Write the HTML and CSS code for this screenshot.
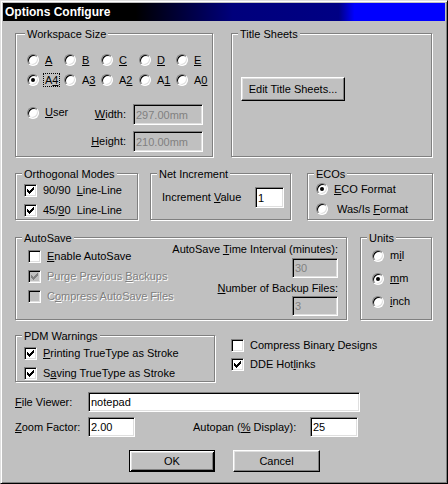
FILE: index.html
```html
<!DOCTYPE html>
<html lang="en">
<head>
    <title>Options Configure</title>
    <link rel="stylesheet" href="styles.css">
</head>
<body>
    <div class="dialog">
        <div class="titlebar">Options Configure</div>
        <div class="content">

            <div class="row row-1">
                <div class="group workspace">
                    <span class="legend legend-wide">Workspace Size</span>
                    <div class="sizes">
                        <label class="opt"><span class="radio"></span><span><u>A</u></span></label>
                        <label class="opt"><span class="radio"></span><span><u>B</u></span></label>
                        <label class="opt"><span class="radio"></span><span><u>C</u></span></label>
                        <label class="opt"><span class="radio"></span><span><u>D</u></span></label>
                        <label class="opt"><span class="radio"></span><span><u>E</u></span></label>
                        <label class="opt"><span class="radio on"></span><span class="focus">A<u>4</u></span></label>
                        <label class="opt"><span class="radio"></span><span>A<u>3</u></span></label>
                        <label class="opt"><span class="radio"></span><span>A<u>2</u></span></label>
                        <label class="opt"><span class="radio"></span><span>A<u>1</u></span></label>
                        <label class="opt"><span class="radio"></span><span>A<u>0</u></span></label>
                    </div>
                    <div class="user">
                        <label class="opt user-opt"><span class="radio"></span><span><u>U</u>ser</span></label>
                        <span class="field-label"><u>W</u>idth:</span>
                        <input class="field" type="text" value="297.00mm" disabled>
                        <span class="field-label"><u>H</u>eight:</span>
                        <input class="field" type="text" value="210.00mm" disabled>
                    </div>
                </div>
                <div class="group titles">
                    <span class="legend">Title Sheets</span>
                    <button class="btn btn-edit">Edit Title Sheets...</button>
                </div>
            </div>

            <div class="row row-2">
                <div class="group ortho">
                    <span class="legend">Orthogonal Modes</span>
                    <label class="opt"><span class="check on"></span><span>90/90&nbsp; <u>L</u>ine-Line</span></label>
                    <label class="opt"><span class="check on"></span><span>45/<u>9</u>0&nbsp; Line-Line</span></label>
                </div>
                <div class="group net">
                    <span class="legend">Net Increment</span>
                    <div class="net-line">
                        <span class="net-label">Increment <u>V</u>alue</span>
                        <input class="field field-net" type="text" value="1">
                    </div>
                </div>
                <div class="group ecos">
                    <span class="legend">ECOs</span>
                    <label class="opt"><span class="radio on"></span><span><u>E</u>CO Format</span></label>
                    <label class="opt"><span class="radio"></span><span class="shift">Was/Is <u>F</u>ormat</span></label>
                </div>
            </div>

            <div class="row row-3">
                <div class="group autosave">
                    <span class="legend">AutoSave</span>
                    <div class="save-opts">
                        <label class="opt"><span class="check"></span><span><u>E</u>nable AutoSave</span></label>
                        <label class="opt off"><span class="check on dim"></span><span>Purge Previous <u>B</u>ackups</span></label>
                        <label class="opt off"><span class="check dim"></span><span>C<u>o</u>mpress AutoSave Files</span></label>
                    </div>
                    <div class="interval">
                        <span>AutoSave <u>T</u>ime Interval (minutes):</span>
                        <input class="field field-small" type="text" value="30" disabled>
                        <span class="backup-label"><u>N</u>umber of Backup Files:</span>
                        <input class="field field-small field-last" type="text" value="3" disabled>
                    </div>
                </div>
                <div class="group units">
                    <span class="legend">Units</span>
                    <label class="opt"><span class="radio"></span><span>m<u>i</u>l</span></label>
                    <label class="opt"><span class="radio on"></span><span><u>m</u>m</span></label>
                    <label class="opt"><span class="radio"></span><span><u>i</u>nch</span></label>
                </div>
            </div>

            <div class="row row-4">
                <div class="group pdm">
                    <span class="legend">PDM Warnings</span>
                    <label class="opt"><span class="check on"></span><span><u>P</u>rinting TrueType as Stroke</span></label>
                    <label class="opt"><span class="check on"></span><span>S<u>a</u>ving TrueType as Stroke</span></label>
                </div>
                <div class="extras">
                    <label class="opt"><span class="check"></span><span>Compress Binar<u>y</u> Designs</span></label>
                    <label class="opt"><span class="check on"></span><span>DDE Hot<u>l</u>inks</span></label>
                </div>
            </div>

            <div class="row row-5">
                <span class="side-label"><u>F</u>ile Viewer:</span>
                <input class="field field-wide" type="text" value="notepad">
            </div>

            <div class="row row-6">
                <span class="side-label"><u>Z</u>oom Factor:</span>
                <input class="field field-zoom" type="text" value="2.00">
                <span class="autopan-label">Autopan (<u>%</u> Display):</span>
                <input class="field field-pan" type="text" value="25">
            </div>

            <div class="row row-7">
                <button class="btn btn-default">OK</button>
                <button class="btn btn-cancel">Cancel</button>
            </div>

        </div>
    </div>
</body>
</html>
```

FILE: styles.css
```css
body {
    margin: 0;
    background: #c0c0c0;
    font-family: "Liberation Sans", Arial, sans-serif;
    font-size: 11px;
    line-height: 13px;
    color: #000;
}
.dialog {
    width: 448px;
    height: 484px;
    box-sizing: border-box;
    border: 1px solid;
    border-color: #dfdfdf #000 #000 #dfdfdf;
    box-shadow: inset 1px 1px #fff, inset -1px -1px #808080;
    padding: 2px;
    background: #c0c0c0;
}
.titlebar {
    height: 18px;
    line-height: 18px;
    padding-left: 2px;
    color: #fff;
    font-size: 12px;
    font-weight: bold;
    background: linear-gradient(to right, #000 0%, #000 30%, #00007c 52%, #000084 76%, #0000ff 79.5%, #0000ff 100%);
}
.content {
    padding-left: 12px;
}
.row {
    display: flex;
    align-items: flex-start;
}
.row-1 { margin-top: 12px; }
.row-2 { margin-top: 16px; }
.row-3 { margin-top: 17px; }
.row-4 { margin-top: 15px; }
.row-5 { margin-top: 10px; align-items: center; }
.row-6 { margin-top: 5px; align-items: center; }
.row-7 { margin-top: 13px; }

/* group boxes */
.group {
    position: relative;
    box-sizing: border-box;
    border: 1px solid #808080;
    box-shadow: 1px 1px 0 #fff, inset 1px 1px 0 #fff;
}
.legend {
    position: absolute;
    top: -6px;
    left: 6px;
    padding: 0 2px;
    background: #c0c0c0;
    white-space: nowrap;
}
.legend-wide {
    left: 9px;
}

/* options */
.opt {
    display: flex;
    align-items: center;
    gap: 6px;
    white-space: nowrap;
    height: 20px;
}
.opt.off {
    color: #808080;
    text-shadow: 1px 1px 0 #fff;
}
.radio {
    position: relative;
    flex: none;
    width: 12px;
    height: 12px;
    box-sizing: border-box;
    border: 1px solid;
    border-color: #808080 #fff #fff #808080;
    border-radius: 50%;
    background: #fff;
    box-shadow: inset 1px 1px #000, inset -1px -1px #dfdfdf;
}
.radio.on::after {
    content: "";
    position: absolute;
    left: 3px;
    top: 3px;
    width: 4px;
    height: 4px;
    border-radius: 50%;
    background: #000;
}
.check {
    position: relative;
    flex: none;
    width: 13px;
    height: 13px;
    box-sizing: border-box;
    border: 1px solid;
    border-color: #808080 #fff #fff #808080;
    background: #fff;
    box-shadow: inset 1px 1px #000, inset -1px -1px #dfdfdf;
    color: #000;
}
.check.dim {
    background: #c0c0c0;
    color: #808080;
}
.check.on::after {
    content: "";
    position: absolute;
    left: 2px;
    top: 2px;
    width: 1px;
    height: 1px;
    box-shadow:
        6px 0, 5px 1px, 6px 1px,
        0 2px, 4px 2px, 5px 2px, 6px 2px,
        0 3px, 1px 3px, 3px 3px, 4px 3px, 5px 3px,
        0 4px, 1px 4px, 2px 4px, 3px 4px, 4px 4px,
        1px 5px, 2px 5px, 3px 5px,
        2px 6px;
}
.focus {
    outline: 1px dotted #000;
    line-height: 12px;
    padding: 0 1px;
    margin-left: -1px;
}

/* fields and buttons */
.field {
    box-sizing: border-box;
    height: 20px;
    margin: 0;
    border: 1px solid;
    border-color: #808080 #fff #fff #808080;
    box-shadow: inset 1px 1px #000, inset -1px -1px #dfdfdf;
    background: #fff;
    padding: 0 2px;
    font-family: "Liberation Sans", Arial, sans-serif;
    font-size: 11px;
    color: #000;
    outline: none;
}
.field:disabled {
    background: #c0c0c0;
    color: #808080;
}
.btn {
    box-sizing: border-box;
    margin: 0;
    padding: 0;
    border: 1px solid;
    border-color: #fff #000 #000 #fff;
    box-shadow: inset -1px -1px #808080, inset 1px 1px #dfdfdf;
    background: #c0c0c0;
    font-family: "Liberation Sans", Arial, sans-serif;
    font-size: 11px;
    color: #000;
}

/* workspace */
.workspace {
    width: 198px;
    height: 124px;
    padding: 16px 0 0 11px;
}
.sizes {
    display: grid;
    grid-template-columns: 37px 37px 38px 37px auto;
    grid-auto-rows: 20px;
}
.user {
    display: grid;
    grid-template-columns: 62px 44px 70px;
    grid-template-rows: 21px 21px;
    row-gap: 6px;
    margin-top: 14px;
}
.user-opt {
    align-self: start;
    height: 13px;
    margin-top: 2px;
}
.field-label {
    grid-column: 2;
    align-self: center;
    text-align: right;
    padding-right: 7px;
}
.user .field {
    grid-column: 3;
    width: 70px;
    height: 21px;
}
.titles {
    width: 201px;
    height: 124px;
    margin-left: 18px;
    padding: 43px 0 0 9px;
}
.btn-edit {
    width: 104px;
    height: 24px;
}

/* row 2 */
.ortho {
    width: 123px;
    height: 47px;
    padding: 6px 0 0 8px;
}
.net {
    width: 141px;
    height: 47px;
    margin-left: 12px;
    padding: 13px 0 0 11px;
}
.net-line {
    display: flex;
    align-items: center;
}
.net-label {
    width: 93px;
    white-space: nowrap;
}
.field-net {
    width: 29px;
    height: 21px;
}
.ecos {
    width: 126px;
    height: 47px;
    margin-left: 16px;
    padding: 5px 0 0 8px;
}
.shift {
    margin-left: 3px;
}

/* row 3 */
.autosave {
    width: 332px;
    height: 83px;
    padding: 5px 8px 0 12px;
    display: flex;
}
.save-opts {
    flex: none;
    width: 130px;
    padding-top: 3px;
}
.interval {
    display: flex;
    flex-direction: column;
    align-items: flex-end;
    margin-left: auto;
    white-space: nowrap;
}
.field-small {
    width: 46px;
    margin-top: 2px;
}
.backup-label {
    margin-top: 4px;
}
.field-last {
    margin-top: 1px;
}
.units {
    width: 72px;
    height: 83px;
    margin-left: 13px;
    padding: 6px 0 0 11px;
}
.units .opt {
    height: 23px;
}

/* row 4 */
.pdm {
    width: 200px;
    height: 47px;
    padding: 7px 0 0 8px;
}
.extras {
    margin-left: 16px;
    padding-top: 1px;
}
.extras .opt {
    height: 19px;
}

/* bottom fields */
.side-label {
    width: 73px;
    white-space: nowrap;
}
.field-wide {
    width: 272px;
}
.field-zoom {
    width: 47px;
}
.autopan-label {
    width: 117px;
    margin-left: 58px;
    white-space: nowrap;
}
.field-pan {
    width: 48px;
}
.row-7 .btn {
    height: 22px;
}
.btn-default {
    width: 86px;
    margin-left: 114px;
    border-color: #000;
    box-shadow: inset 1px 1px #fff, inset -1px -1px #000, inset 2px 2px #dfdfdf, inset -2px -2px #808080;
}
.btn-cancel {
    width: 87px;
    margin-left: 18px;
}
```
